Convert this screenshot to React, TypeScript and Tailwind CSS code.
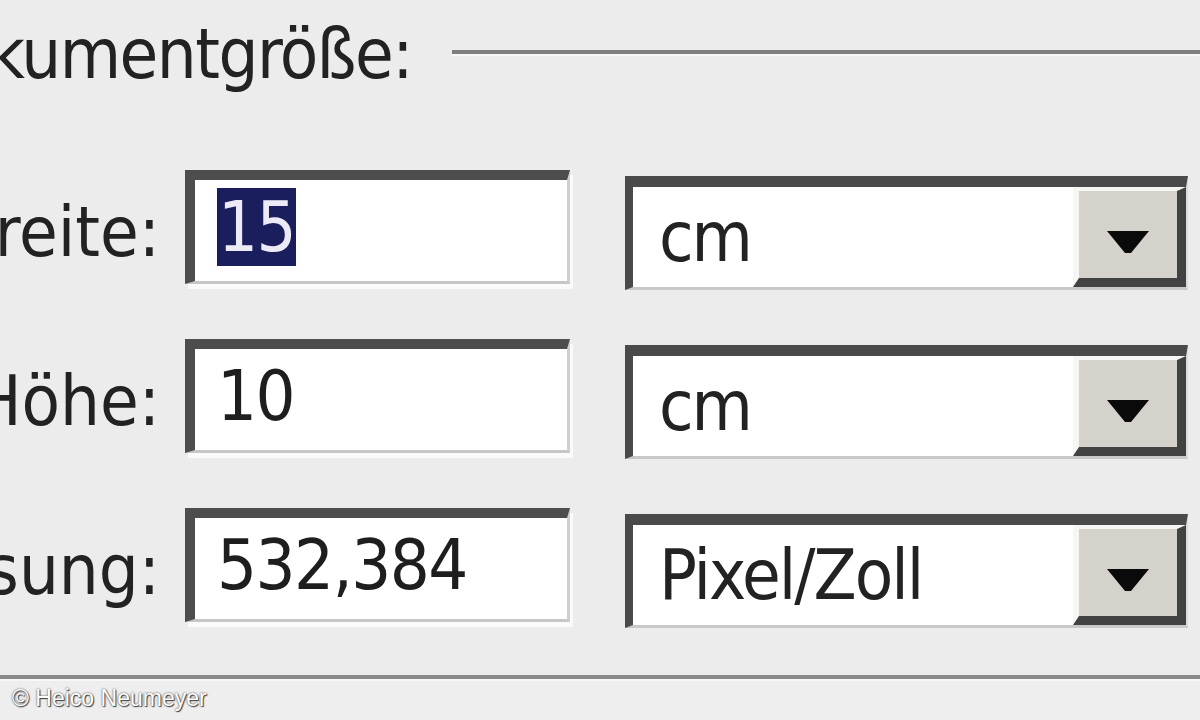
import React from 'react';

const uiFont = { fontFamily: "'DejaVu Sans Condensed', 'DejaVu Sans', sans-serif" };

type Row = { label: string; value: string; unit: string; selected?: boolean };

const rows: Row[] = [
  { label: 'Breite:', value: '15', unit: 'cm', selected: true },
  { label: 'Höhe:', value: '10', unit: 'cm' },
  { label: 'Auflösung:', value: '532,384', unit: 'Pixel/Zoll' },
];

function ComboArrow() {
  return (
    <svg width="42" height="22" viewBox="0 0 42 22" className="mt-[14px]">
      <polygon points="0,0 42,0 24,22 18,22" fill="#0a0a0a" />
    </svg>
  );
}

function FieldRow({ row }: { row: Row }) {
  return (
    <div className="flex items-start h-[114px]">
      {/* label is clipped at the left edge, as in the cropped dialog */}
      <div className="w-[160px] h-[114px] pt-[10px] flex justify-end items-center shrink-0">
        <span className="whitespace-nowrap text-[70px] leading-[80px] text-[#222]">
          {row.label}
        </span>
      </div>

      {/* text field */}
      <div className="ml-[25px] w-[385px] h-[114px] shrink-0 bg-white border-t-[10px] border-l-[10px] border-t-[#4d4d4d] border-l-[#4d4d4d] border-b-[3px] border-r-[3px] border-b-[#c6c6c6] border-r-[#cfcfcf] shadow-[3px_5px_0_#fafafa] flex items-center pl-[22px] pb-[8px]">
        <span
          className={
            row.selected
              ? 'whitespace-nowrap text-[70px] leading-[78px] tracking-[-1.5px] bg-[#1b1e5c] text-[#eceaf6] px-[1px]'
              : 'whitespace-nowrap text-[70px] leading-[78px] tracking-[-1.5px] text-[#1e1e1e]'
          }
        >
          {row.value}
        </span>
      </div>

      {/* combo box */}
      <div className="ml-[55px] mt-[6px] w-[563px] h-[114px] shrink-0 flex border-t-[11px] border-l-[8px] border-t-[#4a4a4a] border-l-[#4a4a4a] border-b-[3px] border-r-[2px] border-b-[#c8c8c8] border-r-[#dcdcdc]">
        <div className="flex-1 bg-white flex items-center pl-[26px]">
          <span className="whitespace-nowrap text-[70px] leading-[80px] tracking-[-2px] text-[#222]">
            {row.unit}
          </span>
        </div>
        <div className="w-[113px] shrink-0 bg-[#d5d2cc] border-t-[4px] border-l-[6px] border-t-[#f6f6f4] border-l-[#f6f6f4] border-b-[9px] border-r-[9px] border-b-[#424242] border-r-[#424242] flex items-center justify-center">
          <ComboArrow />
        </div>
      </div>
    </div>
  );
}

export default function App() {
  return (
    <div className="w-[1200px] h-[720px] overflow-hidden bg-[#ececec] flex flex-col" style={uiFont}>
      {/* group header with etched line */}
      <div className="h-[170px] flex items-start shrink-0">
        <div className="w-[412px] flex justify-end shrink-0 mt-[14px]">
          <span className="whitespace-nowrap text-[70px] leading-[80px] tracking-[-1.5px] text-[#222]">
            Dokumentgröße:
          </span>
        </div>
        <div className="ml-[40px] mt-[50px] flex-1">
          <div className="h-[4px] bg-[#7f7f7f]" />
          <div className="h-[2px] bg-[#f8f8f8]" />
        </div>
      </div>

      <div className="flex flex-col gap-[55px]">
        {rows.map((r) => (
          <FieldRow key={r.label} row={r} />
        ))}
      </div>

      <div className="mt-[53px] shrink-0">
        <div className="h-[4px] bg-[#8a8a8a]" />
        <div className="h-[2px] bg-[#f7f7f7]" />
      </div>

      <div className="flex-1 bg-[#eeeeee] pl-[12px] pt-[3px]">
        <span className="font-['Liberation_Sans',Arial,sans-serif] text-[23px] leading-[28px] text-white [text-shadow:0_0_2px_#333,1px_1px_1px_#444]">
          © Heico Neumeyer
        </span>
      </div>
    </div>
  );
}
